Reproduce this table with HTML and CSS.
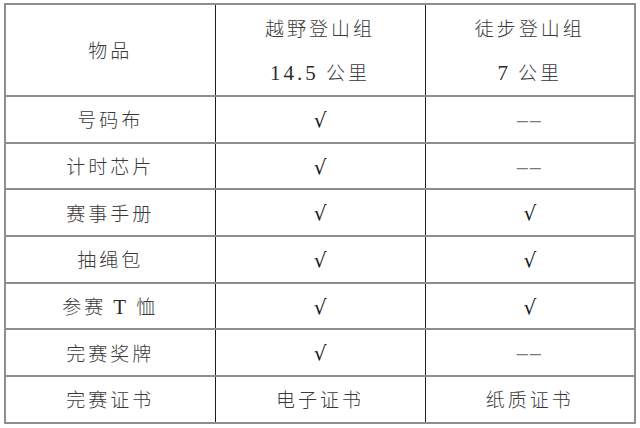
FILE: index.html
```html
<!DOCTYPE html>
<html lang="zh">
<head>
<meta charset="utf-8">
<link rel="stylesheet" href="styles.css">
</head>
<body>
<table class="kit">
  <colgroup><col class="c1"><col class="c2"><col class="c3"></colgroup>
  <tr class="head">
    <td>物品</td>
    <td><div class="line">越野登山组</div><div class="line"><span class="num">14.5</span> 公里</div></td>
    <td><div class="line">徒步登山组</div><div class="line"><span class="num">7</span> 公里</div></td>
  </tr>
  <tr><td>号码布</td><td><span class="ck">√</span></td><td><span class="dash">––</span></td></tr>
  <tr><td>计时芯片</td><td><span class="ck">√</span></td><td><span class="dash">––</span></td></tr>
  <tr><td>赛事手册</td><td><span class="ck">√</span></td><td><span class="ck">√</span></td></tr>
  <tr><td>抽绳包</td><td><span class="ck">√</span></td><td><span class="ck">√</span></td></tr>
  <tr><td>参赛 <span class="num">T</span> 恤</td><td><span class="ck">√</span></td><td><span class="ck">√</span></td></tr>
  <tr><td>完赛奖牌</td><td><span class="ck">√</span></td><td><span class="dash">––</span></td></tr>
  <tr><td>完赛证书</td><td>电子证书</td><td>纸质证书</td></tr>
</table>
</body>
</html>
```

FILE: styles.css
```css
html, body {
  margin: 0;
  padding: 0;
  background: #ffffff;
}

body {
  padding: 3px 0 0 4px;
  font-family: "Noto Sans CJK SC", "Noto Sans", sans-serif;
  font-weight: 300;
  color: #3a3a3a;
}

.kit {
  border-collapse: collapse;
  table-layout: fixed;
  width: 630px;
  border: 2px solid #8e8e8e;
}

.c1 { width: 210px; }
.c2 { width: 210px; }
.c3 { width: 210px; }

.kit td {
  border-top: 2px solid #8e8e8e;
  border-bottom: 2px solid #8e8e8e;
  border-left: 1px solid #1e1e1e;
  border-right: 1px solid #1e1e1e;
  text-align: center;
  vertical-align: middle;
  padding: 0;
  height: 44.7px;
  font-size: 19px;
  letter-spacing: 3px;
  line-height: 24px;
}

.kit td:first-child { border-left: 2px solid #8e8e8e; }
.kit td:last-child { border-right: 2px solid #8e8e8e; }

.kit .head td {
  height: 90px;
}

.line {
  line-height: 44px;
}

.num {
  font-family: "Liberation Serif", serif;
  font-weight: 400;
  font-size: 21px;
  color: #2a2a2a;
}

.ck {
  font-family: "DejaVu Serif", serif;
  font-weight: 400;
  font-size: 20px;
  color: #1a1a1a;
  letter-spacing: 0;
}

.dash {
  font-family: "Liberation Sans", sans-serif;
  font-size: 20px;
  color: #7a7a7a;
  letter-spacing: 2px;
}
```
